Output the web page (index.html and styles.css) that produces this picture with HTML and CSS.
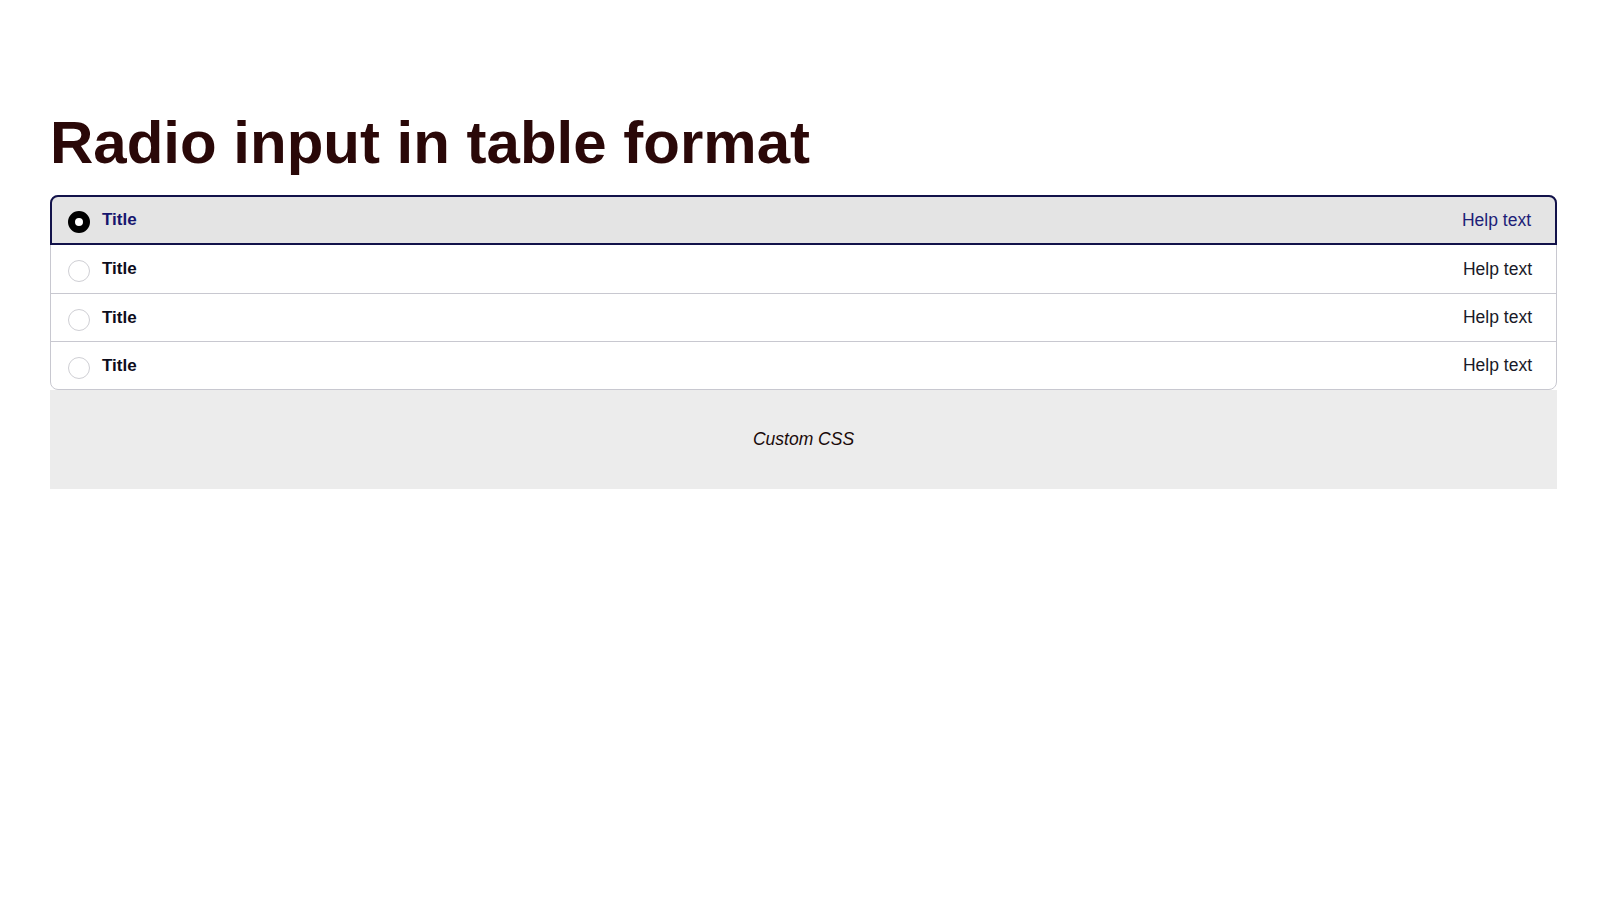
FILE: index.html
```html
<!DOCTYPE html>
<html lang="en">
<head>
<meta charset="utf-8">
<title>Radio input in table format</title>
<link rel="stylesheet" href="styles.css">
</head>
<body>
<main class="page">
  <h1 class="heading">Radio input in table format</h1>
  <fieldset class="list">
    <label class="row selected">
      <input class="radio" type="radio" name="opt" checked>
      <span class="title">Title</span>
      <span class="help">Help text</span>
    </label>
    <label class="row">
      <input class="radio" type="radio" name="opt">
      <span class="title">Title</span>
      <span class="help">Help text</span>
    </label>
    <label class="row">
      <input class="radio" type="radio" name="opt">
      <span class="title">Title</span>
      <span class="help">Help text</span>
    </label>
    <label class="row">
      <input class="radio" type="radio" name="opt">
      <span class="title">Title</span>
      <span class="help">Help text</span>
    </label>
  </fieldset>
  <div class="custom">Custom CSS</div>
</main>
</body>
</html>
```

FILE: styles.css
```css
* { box-sizing: border-box; }
html, body { margin: 0; padding: 0; background: #fff; }
body { font-family: "Liberation Sans", Arial, sans-serif; color: #111; }

.page {
  padding: 108px 49px 0 50px;
}

.heading {
  margin: 0 0 18px 0;
  font-size: 60px;
  line-height: 69px;
  font-weight: 700;
  color: #2a0808;
}

.list {
  margin: 0;
  padding: 0;
  min-width: 0;
  border: 1px solid #c8c8d0;
  border-radius: 8px;
  display: flex;
  flex-direction: column;
}

.row {
  display: flex;
  align-items: center;
  height: 48px;
  padding: 0 24px 0 17px;
  border-top: 1px solid #c8c8d0;
  cursor: pointer;
}

.row.selected {
  height: 50px;
  margin: -1px -1px 0 -1px;
  padding: 0 24px 0 16px;
  border: 2px solid #12124a;
  border-radius: 8px 8px 0 0;
  background: #e4e4e4;
}

.row.selected + .row { border-top: none; }

.radio {
  appearance: none;
  -webkit-appearance: none;
  margin: 4px 12px 0 0;
  width: 22px;
  height: 22px;
  flex: none;
  border-radius: 50%;
  border: 1px solid #cfcfd4;
  background: #fff;
}

.radio:checked {
  border: 7px solid #000;
  background: #fff;
}

.title {
  font-size: 17px;
  font-weight: 700;
  color: #0d0d1c;
}

.help {
  margin-left: auto;
  font-size: 17.5px;
  color: #1a1a28;
}

.selected .title { color: #16166e; }
.selected .help { color: #1e1e78; }

.custom {
  height: 99px;
  display: flex;
  align-items: center;
  justify-content: center;
  background: #ececec;
  font-style: italic;
  font-size: 17.5px;
  color: #1a0a0a;
}
```
